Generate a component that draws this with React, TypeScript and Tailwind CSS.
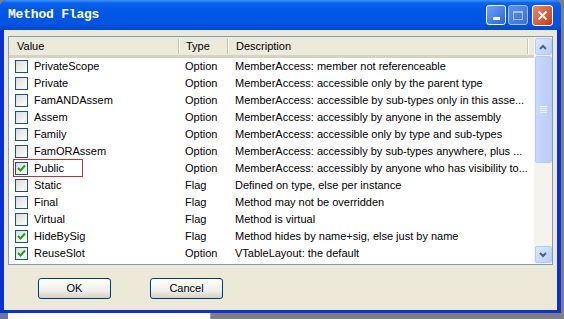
const rows: { name: string; type: string; desc: string; checked: boolean }[] = [
  { name: 'PrivateScope', type: 'Option', desc: 'MemberAccess: member not referenceable', checked: false },
  { name: 'Private', type: 'Option', desc: 'MemberAccess: accessible only by the parent type', checked: false },
  { name: 'FamANDAssem', type: 'Option', desc: 'MemberAccess: accessible by sub-types only in this asse...', checked: false },
  { name: 'Assem', type: 'Option', desc: 'MemberAccess: accessibly by anyone in the assembly', checked: false },
  { name: 'Family', type: 'Option', desc: 'MemberAccess: accessible only by type and sub-types', checked: false },
  { name: 'FamORAssem', type: 'Option', desc: 'MemberAccess: accessibly by sub-types anywhere, plus ...', checked: false },
  { name: 'Public', type: 'Option', desc: 'MemberAccess: accessibly by anyone who has visibility to...', checked: true },
  { name: 'Static', type: 'Flag', desc: 'Defined on type, else per instance', checked: false },
  { name: 'Final', type: 'Flag', desc: 'Method may not be overridden', checked: false },
  { name: 'Virtual', type: 'Flag', desc: 'Method is virtual', checked: false },
  { name: 'HideBySig', type: 'Flag', desc: 'Method hides by name+sig, else just by name', checked: true },
  { name: 'ReuseSlot', type: 'Option', desc: 'VTableLayout: the default', checked: true },
];

function CheckBox({ checked }: { checked: boolean }) {
  return (
    <div className="w-[13px] h-[13px] border border-[#1c5180] bg-[linear-gradient(135deg,#dcdcd7,#ffffff)] flex items-center justify-center shrink-0">
      {checked && (
        <svg width="9" height="9" viewBox="0 0 9 9">
          <path d="M1 4 L3.5 6.5 L8 1.5" fill="none" stroke="#21a121" strokeWidth="2" />
        </svg>
      )}
    </div>
  );
}

function Sep() {
  return <div className="w-[2px] h-[15px] border-l border-[#c7c5b2] bg-white shrink-0" />;
}

function ScrollBtn({ up }: { up: boolean }) {
  return (
    <div className="w-[17px] h-[17px] rounded-[2px] border border-[#b6caf5] bg-[linear-gradient(135deg,#dde8fe,#b6cdfb)] flex items-center justify-center shrink-0">
      <svg width="8" height="6" viewBox="0 0 8 6">
        <path d={up ? 'M1 5 L4 2 L7 5' : 'M1 1 L4 4 L7 1'} fill="none" stroke="#4d6185" strokeWidth="2" />
      </svg>
    </div>
  );
}

function XpButton({ label }: { label: string }) {
  return (
    <div className="w-[73px] h-[21px] rounded-[3px] border border-[#003c74] bg-[linear-gradient(to_bottom,#ffffff,#f0f0ea_60%,#d6d0c5)] flex items-center justify-center text-[11px] text-black">
      {label}
    </div>
  );
}

export default function App() {
  return (
    <div className="w-[564px] h-[319px] bg-[#7f7f7f] overflow-hidden" style={{ fontFamily: '"Liberation Sans", Arial, sans-serif' }}>
      <div className="w-[561px] h-[313px] flex flex-col rounded-t-[7px] bg-[#0831d9] overflow-hidden">
        {/* title bar */}
        <div className="h-[30px] shrink-0 flex items-center px-[8px] bg-[linear-gradient(to_bottom,#3d95ff_0%,#0a62ec_10%,#0058e6_30%,#0055e3_80%,#0048d0_100%)]">
          <div className="flex-1 text-white font-bold text-[13px] tracking-[-0.2px]" style={{ fontFamily: '"Liberation Mono", monospace' }}>
            Method Flags
          </div>
          <div className="flex gap-[2px] items-center">
            <div className="w-[20px] h-[20px] rounded-[3px] border border-white bg-[linear-gradient(135deg,#6fa3ff,#2663e0)] flex items-end justify-center pb-[4px]">
              <div className="w-[7px] h-[3px] bg-white" />
            </div>
            <div className="w-[20px] h-[20px] rounded-[3px] border border-[#a9c4f5] bg-[linear-gradient(135deg,#5b90f0,#3a6fe0)] flex items-center justify-center">
              <div className="w-[10px] h-[9px] border border-[#a9c4f5] border-t-2" />
            </div>
            <div className="ml-[2px] w-[21px] h-[21px] rounded-[3px] border border-white bg-[linear-gradient(135deg,#e88a6a,#c8391a)] flex items-center justify-center">
              <svg width="11" height="11" viewBox="0 0 11 11">
                <path d="M1.5 1.5 L9.5 9.5 M9.5 1.5 L1.5 9.5" stroke="white" strokeWidth="2" />
              </svg>
            </div>
          </div>
        </div>
        {/* body */}
        <div className="flex-1 mx-[4px] mb-[3px] bg-[#ece9d8] flex flex-col">
          <div className="mt-[6px] ml-[4px] w-[545px] h-[229px] border border-[#7f9db9] bg-white flex relative">
            <div className="flex-1 flex flex-col overflow-hidden">
              <div className="h-[21px] shrink-0 flex items-center pt-[1px] bg-[#ebeadb] border-b-[3px] border-[#d6d2c2] text-[11px] text-black">
                <div className="w-[169px] pl-[8px]">Value</div>
                <Sep />
                <div className="w-[47px] pl-[6px]">Type</div>
                <Sep />
                <div className="w-[298px] pl-[7px]">Description</div>
                <Sep />
              </div>
              <div className="h-[206px] overflow-hidden relative">
                {rows.map((r) => (
                  <div key={r.name} className="h-[17px] flex items-center text-[11px] text-black whitespace-nowrap">
                    <div className="w-[169px] flex items-center pl-[6px] gap-[6px]">
                      <CheckBox checked={r.checked} />
                      <span>{r.name}</span>
                    </div>
                    <div className="w-[49px] pl-[7px]">{r.type}</div>
                    <div className="pl-[8px]">{r.desc}</div>
                  </div>
                ))}
                <div className="h-[17px] flex items-start pt-[2px] pl-[6px]">
                  <CheckBox checked={false} />
                </div>
                <div className="absolute left-[4px] top-[101px] w-[70px] h-[18px] border border-[#c8312e]" />
              </div>
            </div>
            {/* scrollbar */}
            <div className="w-[18px] shrink-0 bg-[#f4f3ee] flex flex-col items-center py-[1px]">
              <ScrollBtn up />
              <div className="w-[17px] h-[107px] mt-[1px] rounded-[2px] border border-[#b6caf5] bg-[linear-gradient(to_right,#c9d8fc,#b8cdfa)] flex flex-col items-center justify-center gap-[1px]">
                <div className="w-[7px] h-[1px] bg-[#eef3ff]" />
                <div className="w-[7px] h-[1px] bg-[#eef3ff]" />
                <div className="w-[7px] h-[1px] bg-[#eef3ff]" />
                <div className="w-[7px] h-[1px] bg-[#eef3ff]" />
              </div>
              <div className="flex-1" />
              <ScrollBtn up={false} />
            </div>
          </div>
          <div className="flex gap-[39px] pl-[34px] mt-[13px]">
            <XpButton label="OK" />
            <XpButton label="Cancel" />
          </div>
        </div>
      </div>
      <div className="flex h-[6px]">
        <div className="w-[8px] bg-[#6d7894]" />
        <div className="w-[202px] bg-white" />
        <div className="w-[1px] bg-[#a0a0a0]" />
      </div>
    </div>
  );
}
